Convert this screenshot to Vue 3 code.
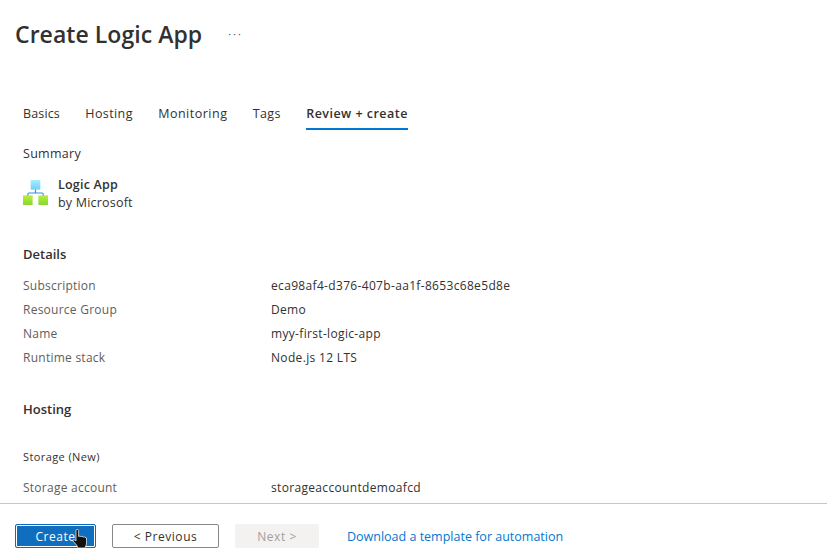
<script setup>
const details = [
  ['Subscription', 'eca98af4-d376-407b-aa1f-8653c68e5d8e'],
  ['Resource Group', 'Demo'],
  ['Name', 'myy-first-logic-app'],
  ['Runtime stack', 'Node.js 12 LTS'],
]
const tabs = ['Basics', 'Hosting', 'Monitoring', 'Tags', 'Review + create']
</script>

<template>
  <div class="page">
    <header class="head">
      <h1>Create Logic App</h1>
      <span class="more">···</span>
    </header>
    <nav class="tabs">
      <span v-for="(t, i) in tabs" :key="t" class="tab" :class="{ active: i === 4 }">{{ t }}</span>
    </nav>
    <main class="content">
      <div class="summary">Summary</div>
      <div class="product">
        <svg class="logo" width="25" height="25" viewBox="0 0 26 26">
          <defs>
            <linearGradient id="top" x1="0" y1="0" x2="0" y2="1"><stop offset="0" stop-color="#a6eeff"/><stop offset="1" stop-color="#6fd0fb"/></linearGradient>
            <linearGradient id="low" x1="0" y1="0" x2="0" y2="1"><stop offset="0" stop-color="#b9ee3c"/><stop offset="1" stop-color="#86d633"/></linearGradient>
          </defs>
          <rect x="8" y="0" width="10" height="10" fill="url(#top)"/>
          <path d="M13 10v3.500M5 17v-2q0-1.500 1.500-1.500h13q1.500 0 1.500 1.500v2" fill="none" stroke="#2f8fdc" stroke-width="1.200"/>
          <rect x="0" y="16" width="10" height="10" fill="url(#low)"/>
          <rect x="16" y="16" width="10" height="10" fill="url(#low)"/>
        </svg>
        <div class="ptext">
          <div class="pname">Logic App</div>
          <div>by Microsoft</div>
        </div>
      </div>
      <h2 class="details">Details</h2>
      <div class="rows">
        <div v-for="r in details" :key="r[0]" class="row"><span class="k">{{ r[0] }}</span><span class="v">{{ r[1] }}</span></div>
      </div>
      <h2 class="hosting">Hosting</h2>
      <div class="storage">Storage (New)</div>
      <div class="row"><span class="k">Storage account</span><span class="v">storageaccountdemoafcd</span></div>
    </main>
    <footer class="foot">
      <button class="btn primary">Create</button>
      <button class="btn prev">&lt; Previous</button>
      <button class="btn next">Next &gt;</button>
      <a class="link">Download a template for automation</a>
      <svg class="cursor" width="18" height="21" viewBox="0 0 18 21">
        <path d="M4 1.500q0-1 1.300-1t1.300 1V7.500l1-.300 1 .300 1.500-.200 1 .700 1.500 0 1.900 1V15l-1.500 4H6L4.500 16 1 12q-.500-1.500 1-1.500L4 12Z" fill="#111" stroke="#fff" stroke-width=".7"/>
      </svg>
    </footer>
  </div>
</template>

<style>
html, body { margin: 0; background: #fff; }
</style>
<style scoped>
.page {
  width: 827px; height: 558px; display: flex; flex-direction: column; overflow: hidden;
  font-family: "Open Sans", "Noto Sans", sans-serif; font-size: 12px; color: #323130; background: #fff;
}
.head { display: flex; align-items: center; height: 68px; padding-left: 15px; box-sizing: border-box; flex: none; }
h1 { margin: 0; font-size: 23px; font-weight: 600; line-height: 68px; color: #323130; letter-spacing: .05px; }
.more { margin: -2px 0 0 26px; font-size: 11px; letter-spacing: 2px; color: #555; }
.tabs { display: flex; gap: 25.300px; padding: 36px 0 0 23px; height: 26px; flex: none; }
.tab { height: 26px; line-height: 20px; font-size: 12.5px; box-sizing: border-box; letter-spacing: .4px; }
.tab:first-child { letter-spacing: .15px; }
.tab:nth-child(3) { letter-spacing: .5px; }
.active { font-weight: 600; border-bottom: 2px solid #0078d4; letter-spacing: .47px; }
.content { flex: 1; padding: 0 23px; min-height: 0; }
.summary { margin-top: 15px; line-height: 18px; font-size: 12.5px; letter-spacing: .3px; }
.product { display: flex; gap: 10px; margin-top: 13px; align-items: center; }
.logo { display: block; width: 25px; height: 25px; margin-bottom: 3px; }
.ptext { line-height: 18px; font-size: 12.5px; letter-spacing: .2px; }
.pname { font-weight: 600; }
h2 { margin: 0; font-size: 13px; font-weight: 600; line-height: 18px; }
.details { margin-top: 33px; }
.rows { margin-top: 11px; }
.row { display: flex; height: 24px; line-height: 24px; font-size: 12px; }
.k { width: 248px; color: #605e5c; flex: none; letter-spacing: .25px; }
.v { letter-spacing: .33px; }
.hosting { margin-top: 30px; }
.storage { margin-top: 30px; line-height: 18px; font-size: 11px; letter-spacing: .4px; }
.storage + .row { margin-top: 10px; }
.foot { flex: none; height: 55px; border-top: 1px solid #c8c6c4; box-sizing: border-box; padding: 20px 0 0 15px; display: flex; align-items: flex-start; position: relative; }
.btn { height: 24px; box-sizing: border-box; font: inherit; font-size: 12px; padding: 2px 0 0; border-radius: 2px; line-height: 20px; letter-spacing: .55px; }
.primary { width: 81px; background: #106ebe; color: #fff; border: 1px solid #0f6cbd; outline: 1px solid #fff; outline-offset: -2px; }
.prev { width: 107px; margin-left: 16px; background: #fff; border: 1px solid #8a8886; color: #323130; }
.next { width: 84px; margin-left: 16px; background: #f3f2f1; border: 1px solid #f3f2f1; color: #a19f9d; }
.link { margin-left: 28px; line-height: 26px; color: #0078d4; font-size: 12.5px; }
.cursor { position: absolute; left: 72px; top: 25px; }
</style>
